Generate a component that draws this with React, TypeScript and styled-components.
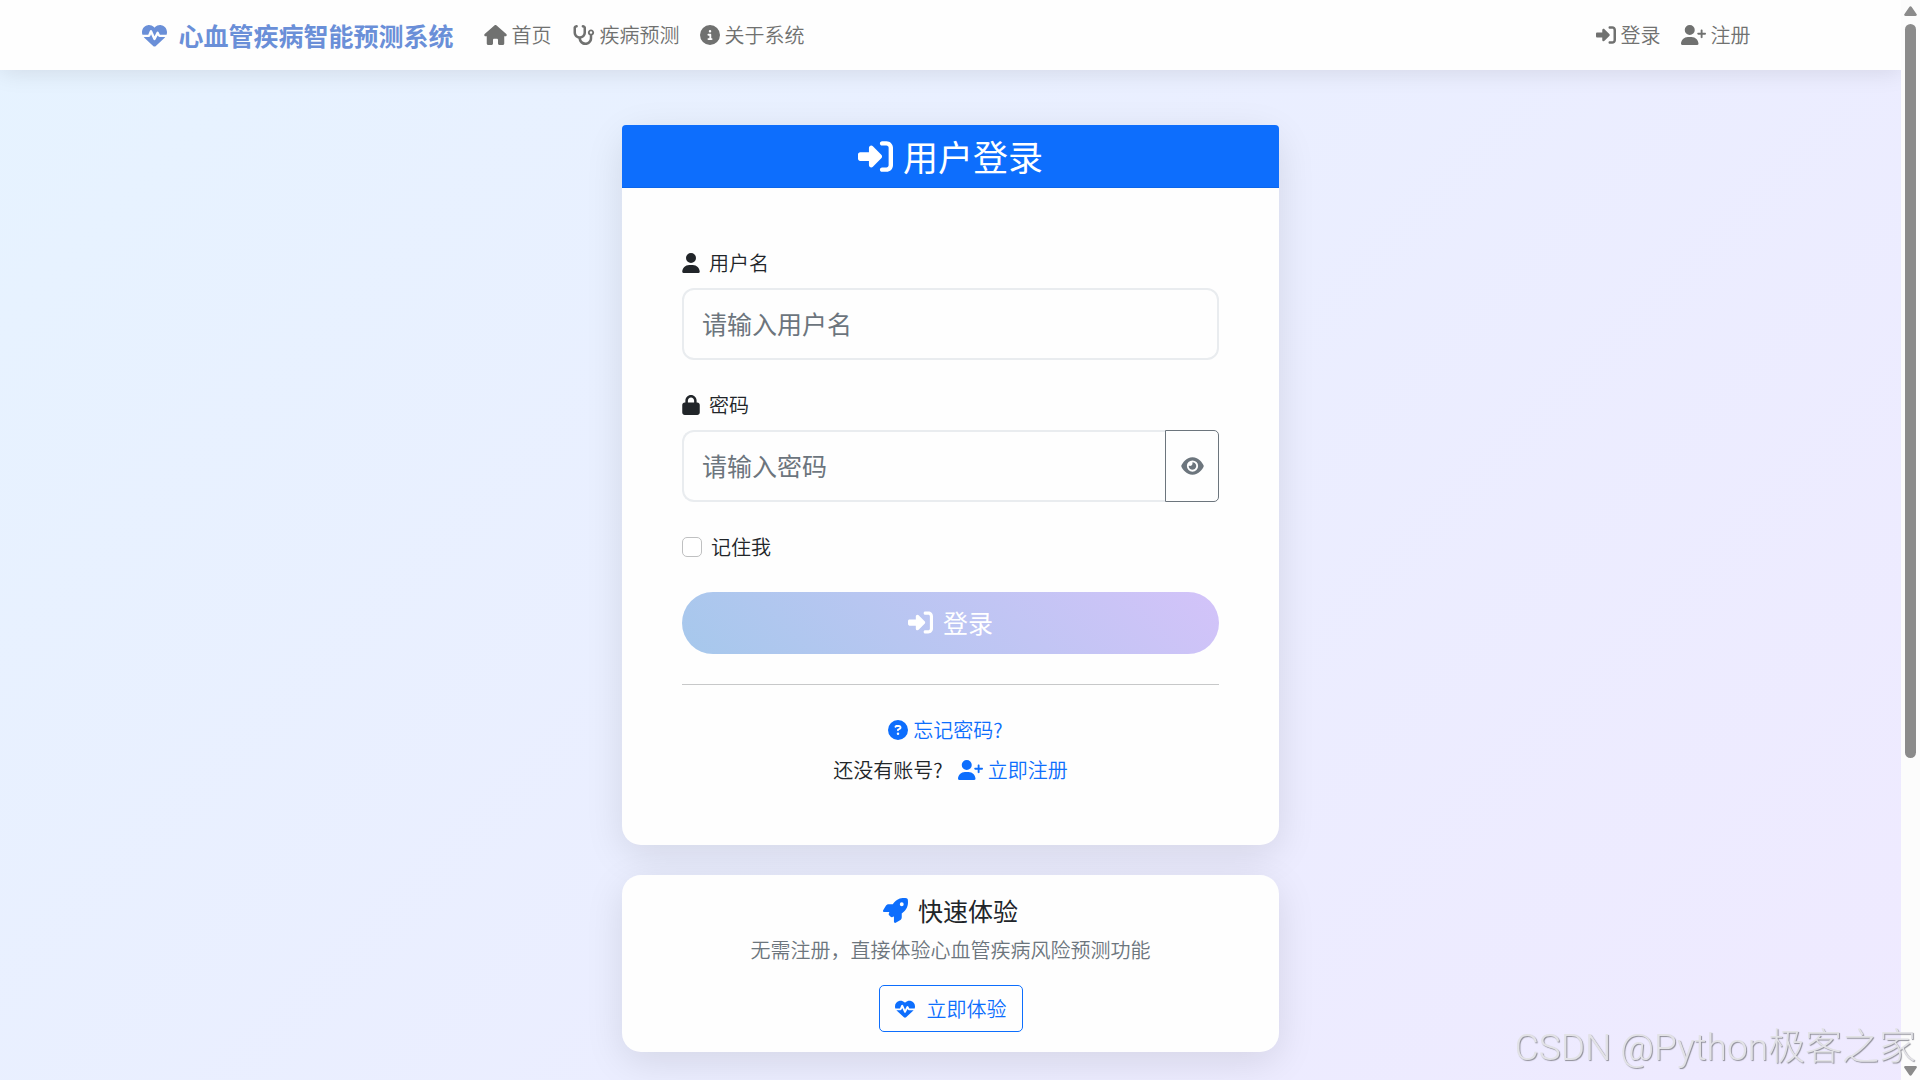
import React from "react";
import styled, { createGlobalStyle } from "styled-components";
import {
  FaHeartPulse,
  FaHouse,
  FaStethoscope,
  FaCircleInfo,
  FaRightToBracket,
  FaUserPlus,
  FaUser,
  FaLock,
  FaEye,
  FaCircleQuestion,
  FaRocket,
} from "react-icons/fa6";

const GlobalStyle = createGlobalStyle`
  *, *::before, *::after { box-sizing: border-box; }
  body {
    margin: 0;
    font-family: "Noto Sans CJK SC", "Noto Sans", sans-serif;
    font-size: 20px;
    font-weight: 350;
    line-height: 30px;
    color: #212529;
  }
  button, input { font: inherit; }
  svg { flex: none; display: block; }
  svg[viewBox="0 0 448 512"] { width: 18px; }
  svg[viewBox="0 0 576 512"] { width: 23px; }
  svg[viewBox="0 0 640 512"] { width: 25px; }
`;

const Screen = styled.div`
  display: grid;
  grid-template-columns: minmax(0, 1fr) 19px;
  height: 100vh;
  overflow: hidden;
`;

const Page = styled.div`
  display: flex;
  flex-direction: column;
  overflow: hidden;
  background: linear-gradient(135deg, #e6f3ff 0%, #f0e8ff 100%) 0 0 / 100% 142vh;
`;

const Navbar = styled.header`
  flex: none;
  background: #fefefe;
  box-shadow: 0 2px 25px rgba(0, 0, 0, 0.1);
`;

const Container = styled.div`
  display: flex;
  align-items: center;
  width: 100%;
  max-width: 1650px;
  height: 70px;
  margin: 0 auto;
  padding: 0 15px;
`;

const Brand = styled.a`
  display: flex;
  align-items: center;
  gap: 12px;
  margin-right: 20px;
  padding-left: 1px;
  color: #6a8fd8;
  font-size: 25px;
  font-weight: 700;
  text-decoration: none;
`;

const Nav = styled.nav<{ $end?: boolean }>`
  display: flex;
  margin-left: ${(p) => (p.$end ? "auto" : "0")};
`;

const NavLink = styled.a`
  display: flex;
  align-items: center;
  gap: 5px;
  padding: 0 10px;
  color: #707170;
  text-decoration: none;
`;

const Main = styled.main`
  display: flex;
  flex-direction: column;
  gap: 30px;
  width: 100%;
  max-width: 657px;
  margin: 0 auto;
  padding: 55px 0;
`;

const Card = styled.section`
  flex: none;
  border-radius: 19px;
  background: #fefefe;
  box-shadow: 0 10px 38px rgba(0, 0, 0, 0.1);
`;

const CardHeader = styled.h1`
  display: flex;
  align-items: center;
  justify-content: center;
  gap: 10px;
  margin: 0;
  padding: 10px 20px;
  border-bottom: 1px solid #0c66ea;
  border-radius: 4px 4px 0 0;
  background: #0d6efd;
  color: #fff;
  font-size: 35px;
  font-weight: 400;
  line-height: 42px;
`;

const Form = styled.form`
  display: flex;
  flex-direction: column;
  gap: 30px;
  padding: 60px;
`;

const Field = styled.div`
  display: flex;
  flex-direction: column;
  gap: 10px;
`;

const Label = styled.label`
  display: flex;
  align-items: center;
  gap: 9px;
`;

const InputGroup = styled.div`
  display: flex;
`;

const TextInput = styled.input<{ $joined?: boolean }>`
  flex: 1;
  min-width: 0;
  height: 72px;
  padding: 14px 18px 16px;
  border: 2px solid #e9ecef;
  border-right-width: ${(p) => (p.$joined ? "0" : "2px")};
  border-radius: ${(p) => (p.$joined ? "12px 0 0 12px" : "12px")};
  background: #fefefe;
  color: #212529;
  font-size: 25px;
  font-weight: 400;
  outline: none;
  &::placeholder {
    color: #6c757d;
    opacity: 1;
  }
`;

const EyeButton = styled.button`
  display: flex;
  align-items: center;
  justify-content: center;
  width: 54px;
  padding: 0;
  border: 1px solid #6c757d;
  border-radius: 0 5px 5px 0;
  background: transparent;
  color: #6c757d;
`;

const Checkbox = styled.input`
  appearance: none;
  width: 20px;
  height: 20px;
  margin: 0;
  border: 1px solid #bfc0c1;
  border-radius: 5px;
  background: #fff;
`;

const SubmitButton = styled.button`
  display: flex;
  align-items: center;
  justify-content: center;
  gap: 10px;
  height: 62px;
  padding: 0 20px 2px;
  border: 0;
  border-radius: 31px;
  background: linear-gradient(45deg, #a6c8ec, #d3c3f9);
  color: #fff;
  font-size: 25px;
  font-weight: 400;
`;

const Links = styled.div`
  display: flex;
  flex-direction: column;
  align-items: center;
  gap: 10px;
  padding-top: 30px;
  border-top: 1px solid #c7c8c9;
`;

const LinkRow = styled.div`
  display: flex;
  gap: 15px;
`;

const TextLink = styled.a<{ $spaced?: boolean }>`
  display: flex;
  align-items: center;
  gap: 5px;
  margin-right: ${(p) => (p.$spaced ? "10px" : "0")};
  color: #0d6efd;
  text-decoration: none;
`;

const QuickBody = styled.div`
  display: flex;
  flex-direction: column;
  align-items: center;
  padding: 20px;
`;

const QuickTitle = styled.h2`
  display: flex;
  align-items: center;
  gap: 10px;
  margin: 0 0 10px;
  font-size: 25px;
  font-weight: 400;
  line-height: 30px;
  svg { color: #0d6efd; }
`;

const QuickText = styled.p`
  margin: 0 0 20px;
  color: #6c757d;
`;

const OutlineLink = styled.a`
  display: flex;
  align-items: center;
  gap: 12px;
  height: 47px;
  padding: 0 15px;
  border: 1px solid #0d6efd;
  border-radius: 5px;
  color: #0d6efd;
  text-decoration: none;
`;

const Scrollbar = styled.div`
  display: flex;
  flex-direction: column;
  align-items: center;
  gap: 8px;
  padding: 6px 0 4px;
  background: #fcfcfc;
  color: #8b8b8b;
`;

const Track = styled.div`
  flex: 1;
  width: 11px;
`;

const Thumb = styled.div`
  height: 71%;
  border-radius: 6px;
  background: currentColor;
`;

const ArrowIcon = styled.svg`
  width: 13px;
  height: 10px;
`;

const Watermark = styled.div`
  position: fixed;
  right: 4px;
  bottom: 5px;
  color: #e2e2e6;
  font-family: Roboto, "Noto Sans CJK SC", sans-serif;
  font-size: 37px;
  font-weight: 300;
  line-height: 54px;
  text-shadow: 1px 1px 1px #8f8f98;
  white-space: nowrap;
`;

const Arrow = ({ down = false }: { down?: boolean }) => (
  <ArrowIcon viewBox="0 0 13 10" fill="currentColor" aria-hidden="true">
    <path
      d={
        down
          ? "M1.5 0h10c1.2 0 1.8 1.2 1 2.1l-4.8 7c-.7 1-1.7 1-2.4 0l-4.8-7C-.3 1.2.3 0 1.5 0z"
          : "M1.5 10h10c1.2 0 1.8-1.2 1-2.1l-4.8-7c-.7-1-1.7-1-2.4 0l-4.8 7C-.3 8.8.3 10 1.5 10z"
      }
    />
  </ArrowIcon>
);

export default function App() {
  return (
    <>
      <GlobalStyle />
      <Screen>
        <Page>
          <Navbar>
            <Container>
              <Brand href="#">
                <FaHeartPulse />
                心血管疾病智能预测系统
              </Brand>
              <Nav>
                <NavLink href="#home"><FaHouse />首页</NavLink>
                <NavLink href="#predict"><FaStethoscope />疾病预测</NavLink>
                <NavLink href="#about"><FaCircleInfo />关于系统</NavLink>
              </Nav>
              <Nav $end>
                <NavLink href="#login"><FaRightToBracket />登录</NavLink>
                <NavLink href="#register"><FaUserPlus />注册</NavLink>
              </Nav>
            </Container>
          </Navbar>
          <Main>
            <Card>
              <CardHeader><FaRightToBracket />用户登录</CardHeader>
              <Form onSubmit={(e) => e.preventDefault()}>
                <Field>
                  <Label htmlFor="username"><FaUser />用户名</Label>
                  <InputGroup>
                    <TextInput id="username" type="text" placeholder="请输入用户名" />
                  </InputGroup>
                </Field>
                <Field>
                  <Label htmlFor="password"><FaLock />密码</Label>
                  <InputGroup>
                    <TextInput id="password" type="password" placeholder="请输入密码" $joined />
                    <EyeButton type="button" aria-label="显示密码"><FaEye /></EyeButton>
                  </InputGroup>
                </Field>
                <Label><Checkbox type="checkbox" />记住我</Label>
                <SubmitButton type="submit"><FaRightToBracket />登录</SubmitButton>
                <Links>
                  <TextLink href="#forgot" $spaced><FaCircleQuestion />忘记密码?</TextLink>
                  <LinkRow>
                    <span>还没有账号?</span>
                    <TextLink href="#register"><FaUserPlus />立即注册</TextLink>
                  </LinkRow>
                </Links>
              </Form>
            </Card>
            <Card>
              <QuickBody>
                <QuickTitle><FaRocket />快速体验</QuickTitle>
                <QuickText>无需注册，直接体验心血管疾病风险预测功能</QuickText>
                <OutlineLink href="#try"><FaHeartPulse />立即体验</OutlineLink>
              </QuickBody>
            </Card>
          </Main>
        </Page>
        <Scrollbar aria-hidden="true">
          <Arrow />
          <Track><Thumb /></Track>
          <Arrow down />
        </Scrollbar>
      </Screen>
      <Watermark>CSDN @Python极客之家</Watermark>
    </>
  );
}
